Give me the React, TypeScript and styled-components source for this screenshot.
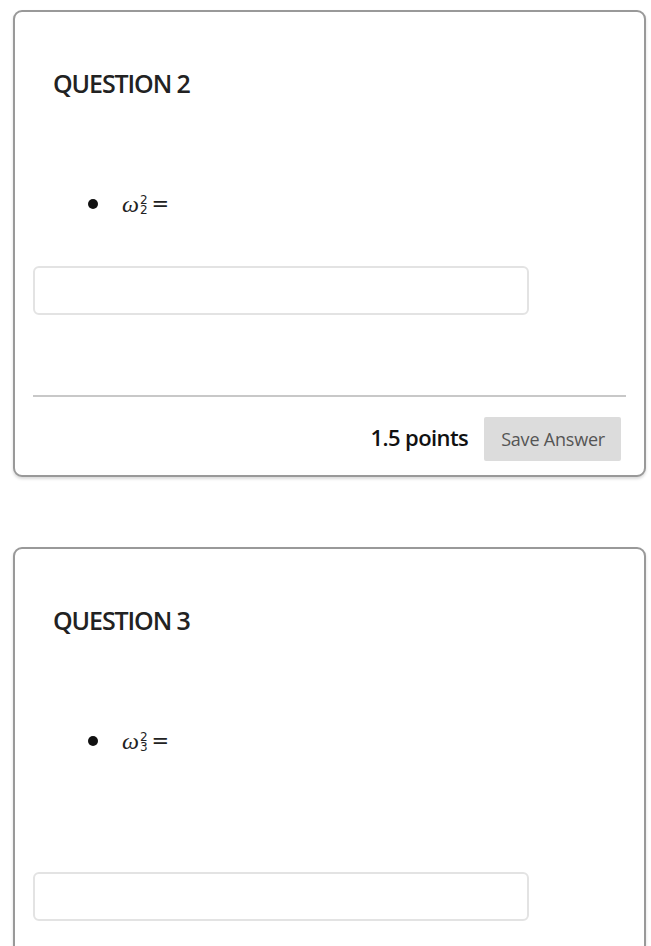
import styled, { createGlobalStyle } from 'styled-components';

const GlobalStyle = createGlobalStyle`
  html, body {
    margin: 0;
    padding: 0;
    background: #ffffff;
    font-family: "Open Sans", "Noto Sans", sans-serif;
  }
`;

const Page = styled.div`
  display: flex;
  flex-direction: column;
  gap: 70px;
  padding: 10px 5px 0 13px;
`;

const Card = styled.section`
  width: 633px;
  box-sizing: border-box;
  border: 2px solid #999;
  border-radius: 9px;
  background: #fff;
  box-shadow: 0 2px 3px rgba(0, 0, 0, 0.15);
  padding: 0 18px 0 18px;
`;

const Title = styled.h2`
  margin: 0;
  padding: 55px 0 0 20px;
  font-size: 25px;
  font-weight: 600;
  letter-spacing: -1.1px;
  color: #222;
  line-height: 32px;
`;

const Bullets = styled.ul<{ $after: number }>`
  margin: 92px 0 ${(p) => p.$after}px 0;
  padding: 0 0 0 55px;
  list-style: none;
`;

const Item = styled.li`
  display: flex;
  align-items: center;
  gap: 24px;
  height: 26px;

  &::before {
    content: '';
    width: 10px;
    height: 10px;
    border-radius: 50%;
    background: #111;
  }
`;

const Math = styled.span`
  font-family: "Liberation Serif", "DejaVu Serif", serif;
  font-size: 24px;
  color: #222;
  display: inline-flex;
  align-items: center;
  gap: 4px;
`;

const Omega = styled.span`
  font-style: italic;
  display: inline-flex;
  align-items: center;
  line-height: 24px;
`;

const Scripts = styled.span`
  display: inline-flex;
  flex-direction: column;
  font-family: "DejaVu Sans", sans-serif;
  font-style: normal;
  font-size: 12px;
  line-height: 10px;
  margin-left: 1px;
  padding-top: 2px;
`;

const Equals = styled.span`
  font-family: "DejaVu Sans", sans-serif;
  font-size: 21px;
  line-height: 24px;
`;

const AnswerInput = styled.input`
  display: block;
  width: 496px;
  height: 49px;
  box-sizing: border-box;
  border: 2px solid #e3e3e3;
  border-radius: 6px;
  background: #fff;
  outline: none;
`;

const Divider = styled.hr`
  margin: 80px 0 0 0;
  border: none;
  border-top: 2px solid #c8c8c8;
`;

const Footer = styled.div`
  display: flex;
  justify-content: flex-end;
  align-items: center;
  gap: 16px;
  padding: 20px 5px 14px 0;
`;

const Points = styled.span`
  font-size: 22px;
  font-weight: 600;
  letter-spacing: -0.6px;
  line-height: 28px;
  margin-top: -4px;
  color: #111;
`;

const SaveButton = styled.button`
  height: 44px;
  padding: 0 16px 0 17px;
  border: none;
  border-radius: 2px;
  background: #dcdcdc;
  color: #555;
  font-family: "Open Sans", "Noto Sans", sans-serif;
  font-size: 18px;
  letter-spacing: -0.2px;
`;

const Term = ({ sub }: { sub: string }) => (
  <Math>
    <Omega>
      ω
      <Scripts>
        <span>2</span>
        <span>{sub}</span>
      </Scripts>
    </Omega>
    <Equals>=</Equals>
  </Math>
);

export default function App() {
  return (
    <>
      <GlobalStyle />
      <Page>
        <Card>
          <Title>QUESTION 2</Title>
          <Bullets $after={49}>
            <Item>
              <Term sub="2" />
            </Item>
          </Bullets>
          <AnswerInput />
          <Divider />
          <Footer>
            <Points>1.5 points</Points>
            <SaveButton>Save Answer</SaveButton>
          </Footer>
        </Card>
        <Card>
          <Title>QUESTION 3</Title>
          <Bullets $after={118}>
            <Item>
              <Term sub="3" />
            </Item>
          </Bullets>
          <AnswerInput />
          <Divider />
          <Footer>
            <Points>1.5 points</Points>
            <SaveButton>Save Answer</SaveButton>
          </Footer>
        </Card>
      </Page>
    </>
  );
}
